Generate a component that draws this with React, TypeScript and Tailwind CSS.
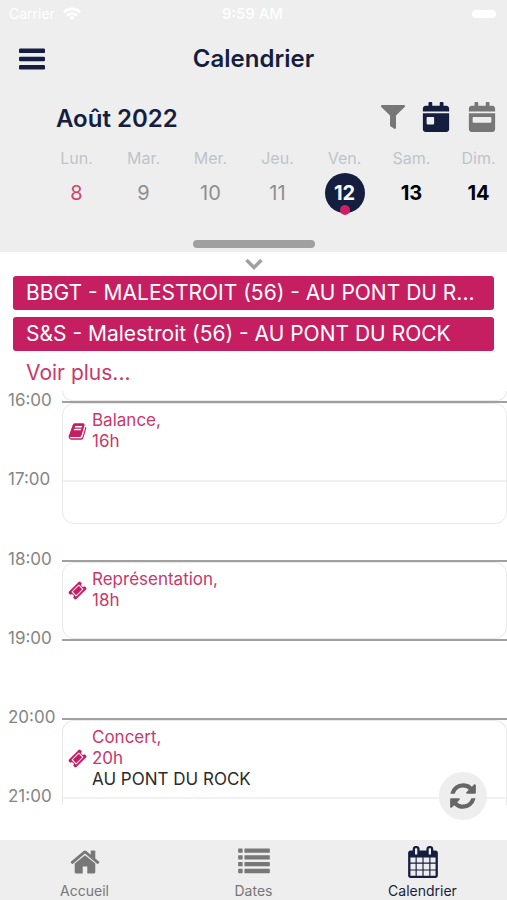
import { useState } from "react";
import { FaCalendarDay, FaCalendarWeek, FaFilter } from "react-icons/fa";

const icons = {
  home: "M1472 992v480q0 26-19 45t-45 19h-384v-384h-256v384h-384q-26 0-45-19t-19-45v-480q0-1 .5-3t.5-3l575-474 575 474q1 2 1 6zm223-69l-62 74q-8 9-21 11h-3q-13 0-21-7l-692-577-692 577q-12 8-24 7-13-2-21-11l-62-74q-8-10-7-23.5t11-21.5l719-599q32-26 76-26t76 26l244 204v-195q0-14 9-23t23-9h192q14 0 23 9t9 23v408l219 182q10 8 11 21.5t-7 23.5z",
  list: "M40 140h190q30 0 30 30v180q0 30-30 30h-190q-30 0-30-30v-180q0-30 30-30zM40 520h190q30 0 30 30v180q0 30-30 30h-190q-30 0-30-30v-180q0-30 30-30zM40 900h190q30 0 30 30v180q0 30-30 30h-190q-30 0-30-30v-180q0-30 30-30zM40 1280h190q30 0 30 30v180q0 30-30 30h-190q-30 0-30-30v-180q0-30 30-30zM390 140h1362q30 0 30 30v180q0 30-30 30h-1362q-30 0-30-30v-180q0-30 30-30zM390 520h1362q30 0 30 30v180q0 30-30 30h-1362q-30 0-30-30v-180q0-30 30-30zM390 900h1362q30 0 30 30v180q0 30-30 30h-1362q-30 0-30-30v-180q0-30 30-30zM390 1280h1362q30 0 30 30v180q0 30-30 30h-1362q-30 0-30-30v-180q0-30 30-30z",
  calendar: "M192 1664h288v-288h-288v288zm352 0h320v-288h-320v288zm-352-352h288v-320h-288v320zm352 0h320v-320h-320v320zm-352-384h288v-288h-288v288zm736 736h320v-288h-320v288zm-384-736h320v-288h-320v288zm768 736h288v-288h-288v288zm-384-352h320v-320h-320v320zm-352-864v-288q0-13-9.5-22.5t-22.5-9.5h-64q-13 0-22.5 9.5t-9.5 22.5v288q0 13 9.5 22.5t22.5 9.5h64q13 0 22.500-9.500t9.500-22.500zm736 864h288v-320h-288v320zm-384-384h320v-288h-320v288zm384 0h288v-288h-288v288zm32-480v-288q0-13-9.500-22.500t-22.500-9.500h-64q-13 0-22.500 9.500t-9.500 22.500v288q0 13 9.500 22.500t22.500 9.500h64q13 0 22.500-9.500t9.500-22.500zm384-64v1280q0 52-38 90t-90 38h-1408q-52 0-90-38t-38-90v-1280q0-52 38-90t90-38h128v-96q0-66 47-113t113-47h64q66 0 113 47t47 113v96h384v-96q0-66 47-113t113-47h64q66 0 113 47t47 113v96h128q52 0 90 38t38 90z",
  refresh: "M1639 1056q0 5-1 7-64 268-268 434.5t-478 166.5q-146 0-282.5-55t-243.5-157l-129 129q-19 19-45 19t-45-19-19-45v-448q0-26 19-45t45-19h448q26 0 45 19t19 45-19 45l-137 137q71 66 161 102t187 36q134 0 250-65t186-179q11-17 53-117 8-23 30-23h192q13 0 22.5 9.5t9.5 22.5zm25-800v448q0 26-19 45t-45 19h-448q-26 0-45-19t-19-45 19-45l138-138q-148-137-349-137-134 0-250 65t-186 179q-11 17-53 117-8 23-30 23h-199q-13 0-22.5-9.5t-9.5-22.5v-7q65-268 270-434.5t480-166.5q146 0 284 55.5t245 156.5l130-129q19-19 45-19t45 19 19 45z",
  ticket: "M1024 452l316 316-572 572-316-316zm-211 979l618-618q19-19 19-45t-19-45l-362-362q-18-18-45-18t-45 18l-618 618q-19 19-19 45t19 45l362 362q18 18 45 18t45-18zm889-637l-907 908q-37 37-90.5 37t-90.5-37l-126-126q56-56 56-136t-56-136-136-56-136 56l-125-126q-37-37-37-90.5t37-90.5l907-906q37-37 90.5-37t90.5 37l125 125q-56 56-56 136t56 136 136 56 136-56l126 125q37 37 37 90.5t-37 90.5z",
  book: "M1703 478q40 57 18 129l-275 906q-19 64-76.5 107.5t-122.5 43.5h-923q-77 0-148.5-53.5t-99.5-131.5q-24-67-2-127 0-4 3-27t4-37q1-8-3-21.5t-3-19.5q2-11 8-21t16.5-23.5 16.5-23.5q23-38 45-91.5t30-91.5q3-10 .5-30t-.5-28q3-11 17-28t17-23q21-36 42-92t25-90q1-9-2.5-32t.5-28q4-13 22-30.5t22-22.5q19-26 42.5-84.5t27.5-96.5q1-8-3-25.5t-2-26.5q2-8 9-18t18-23 17-21q8-12 16.5-30.5t15-35 16-36 19.5-32 26.5-23.5 36-11.5 47.5 5.5l-1 3q38-9 51-9h761q74 0 114 56t18 130l-274 906q-36 119-71.5 153.5t-128.5 34.5h-869q-27 0-38 15-11 16-1 43 24 70 144 70h923q29 0 56-15.5t35-41.5l300-987q7-22 5-57 38 15 59 43zm-1064 2q-4 13 2 22.5t20 9.5h608q13 0 25.5-9.5t16.5-22.5l21-64q4-13-2-22.5t-20-9.5h-608q-13 0-25.5 9.5t-16.5 22.5zm-83 256q-4 13 2 22.5t20 9.5h608q13 0 25.5-9.5t16.5-22.5l21-64q4-13-2-22.5t-20-9.5h-608q-13 0-25.5 9.5t-16.5 22.5z",
};

function Icon({ name, className }: { name: keyof typeof icons; className: string }) {
  return (
    <svg viewBox="0 0 1792 1792" fill="currentColor" className={className} aria-hidden="true">
      <path d={icons[name]} />
    </svg>
  );
}

const days = [
  { name: "Lun.", num: 8, style: "text-[#d1426f]" },
  { name: "Mar.", num: 9, style: "text-[#8e8e8e]" },
  { name: "Mer.", num: 10, style: "text-[#8e8e8e]" },
  { name: "Jeu.", num: 11, style: "text-[#8e8e8e]" },
  { name: "Ven.", num: 12, style: "bg-[#161e40] font-bold text-white" },
  { name: "Sam.", num: 13, style: "font-bold text-black" },
  { name: "Dim.", num: 14, style: "font-bold text-black" },
];

// each hour takes two rows of the timeline, after the leading one
const hours = [
  { label: "16:00", row: "row-start-2" },
  { label: "17:00", row: "row-start-4" },
  { label: "18:00", row: "row-start-6" },
  { label: "19:00", row: "row-start-8" },
  { label: "20:00", row: "row-start-10" },
  { label: "21:00", row: "row-start-12" },
];

const events = [
  { title: "Balance,", time: "16h", place: "", icon: "book", box: "row-start-2 row-span-3 -mb-1 rounded-xl border" },
  { title: "Représentation,", time: "18h", place: "", icon: "ticket", box: "row-start-6 row-span-2 rounded-xl border" },
  { title: "Concert,", time: "20h", place: "AU PONT DU ROCK", icon: "ticket", box: "row-start-10 row-span-3 rounded-t-xl border border-b-0" },
] as const;

const tabs = [
  { label: "Accueil", icon: "home" },
  { label: "Dates", icon: "list" },
  { label: "Calendrier", icon: "calendar" },
] as const;

export default function App() {
  const [selected, setSelected] = useState(12);

  return (
    <div className="flex min-h-screen flex-col overflow-hidden bg-white font-['Inter',sans-serif]">
      <header className="bg-[#eeeeee]">
        <div className="grid h-7 grid-cols-3 items-center pr-[11px] pl-[9px] text-sm text-white">
          <div className="flex items-center gap-2">
            Carrier
            <svg viewBox="0 0 18 14" className="h-3.5 w-[18px]" fill="none" stroke="currentColor" strokeWidth="2.6">
              <path d="M1 5.200a11.400 11.400 0 0 1 16 0M4 8.600a7.200 7.200 0 0 1 10 0" />
              <path d="M9 13.500l-2.800-3a4 4 0 0 1 5.600 0z" fill="currentColor" stroke="none" />
            </svg>
          </div>
          <div className="text-center text-[15px] font-medium">9:59 AM</div>
          <div className="h-2 w-6 justify-self-end rounded-sm bg-white" />
        </div>

        <div className="grid h-[62px] grid-cols-[1fr_auto_1fr] items-center px-[19px] text-[#161e40]">
          <button aria-label="Menu" className="justify-self-start">
            <svg viewBox="0 0 26 22" className="h-[22px] w-[26px]" fill="currentColor">
              <rect y="0.500" width="26" height="4.600" rx="1.200" />
              <rect y="8.700" width="26" height="4.600" rx="1.200" />
              <rect y="16.900" width="26" height="4.600" rx="1.200" />
            </svg>
          </button>
          <h1 className="text-2xl font-semibold">Calendrier</h1>
        </div>

        <div className="flex h-[54px] items-center justify-between pr-2.5 pl-14">
          <h2 className="pt-1 text-2xl font-semibold text-[#161e40]">Août 2022</h2>
          <div className="flex items-center gap-4 text-[#777777]">
            <button aria-label="Filtrer">
              <FaFilter className="size-6" />
            </button>
            <button aria-label="Vue jour" className="text-[#161e40]">
              <FaCalendarDay className="size-[30px]" />
            </button>
            <button aria-label="Vue semaine">
              <FaCalendarWeek className="size-[30px]" />
            </button>
          </div>
        </div>

        <div className="-mr-[5px] grid grid-cols-7 pt-1 pl-[43px]">
          {days.map((d) => (
            <div key={d.num} className="flex flex-col items-center gap-[5px]">
              <span className="text-base leading-5 text-[#bcc5cb]">{d.name}</span>
              <button
                onClick={() => setSelected(d.num)}
                className={`relative flex size-10 items-center justify-center rounded-full text-xl ${d.style}`}
              >
                {d.num}
                {d.num === selected && (
                  <span className="absolute -bottom-0.5 size-2.5 rounded-full bg-[#d01f62]" />
                )}
              </button>
            </div>
          ))}
        </div>

        <div className="flex justify-center pt-[27px] pb-1">
          <div className="h-2 w-[122px] rounded-full bg-[#a0a0a0]" />
        </div>
      </header>

      <main className="flex grow flex-col">
        <button aria-label="Déplier" className="flex h-6 items-center justify-center text-[#a0a0a0]">
          <svg viewBox="0 0 18 12" className="h-3 w-[18px]" fill="none" stroke="currentColor" strokeWidth="3.4">
            <path d="M1.500 2l7.500 7.500L16.500 2" />
          </svg>
        </button>

        <div className="flex flex-col gap-[7px] px-[13px] text-[21px] leading-[34px]">
          <a href="#bbgt" className="truncate rounded-[3px] bg-[#c61f61] px-[13px] text-white">
            BBGT - MALESTROIT (56) - AU PONT DU R...
          </a>
          <a href="#ss" className="truncate rounded-[3px] bg-[#c61f61] px-[13px] text-white">
            S&amp;S - Malestroit (56) - AU PONT DU ROCK
          </a>
        </div>
        <a href="#plus" className="self-start pt-1 pl-[26px] text-[21px] leading-9 text-[#c9376b]">
          Voir plus...
        </a>

        <div className="grid grid-cols-[62px_1fr] grid-rows-[10px_39px_40px_40px_40px_39px_40px_39px_40px_39px_40px_8px] overflow-hidden">
          <div className="col-start-2 row-start-1 rounded-b-xl border border-t-0 border-[#e9e9e9]" />
          {hours.map((h) => (
            <div key={h.label} className={`col-span-2 col-start-1 flex h-0 ${h.row}`}>
              <span className="-mt-[9px] h-4 w-[62px] shrink-0 pl-2 text-[17px] leading-4 text-[#858585]">{h.label}</span>
              <span className="h-0.5 grow bg-[#a0a0a0]" />
            </div>
          ))}
          {events.map((e) => (
            <article
              key={e.time}
              className={`z-10 col-start-2 mt-0.5 flex items-start border-[#e9e9e9] bg-white/85 px-[5px] pt-1.5 text-[17px] leading-[21px] text-[#c9376b] ${e.box}`}
            >
              <div className="flex items-center gap-[5px]">
                <Icon name={e.icon} className="size-[19px] text-[#c61f61]" />
                <div>
                  <p>{e.title}</p>
                  <p>{e.time}</p>
                  {e.place && <p className="text-[#2b2b2b]">{e.place}</p>}
                </div>
              </div>
            </article>
          ))}
        </div>
      </main>

      <button
        aria-label="Actualiser"
        className="fixed right-5 bottom-20 z-20 flex size-12 items-center justify-center rounded-full bg-[#eeeeee] text-[#666666]"
      >
        <Icon name="refresh" className="size-[30px]" />
      </button>

      <nav className="grid h-[60px] grid-cols-3 bg-[#eeeeee] text-sm">
        {tabs.map((t) => (
          <a
            key={t.label}
            href={`#${t.icon}`}
            className={`flex flex-col items-center gap-[3px] pt-1.5 leading-5 ${t.icon === "calendar" ? "text-[#161e40]" : "text-[#777777]"}`}
          >
            <Icon name={t.icon} className="size-8" />
            {t.label}
          </a>
        ))}
      </nav>
    </div>
  );
}
